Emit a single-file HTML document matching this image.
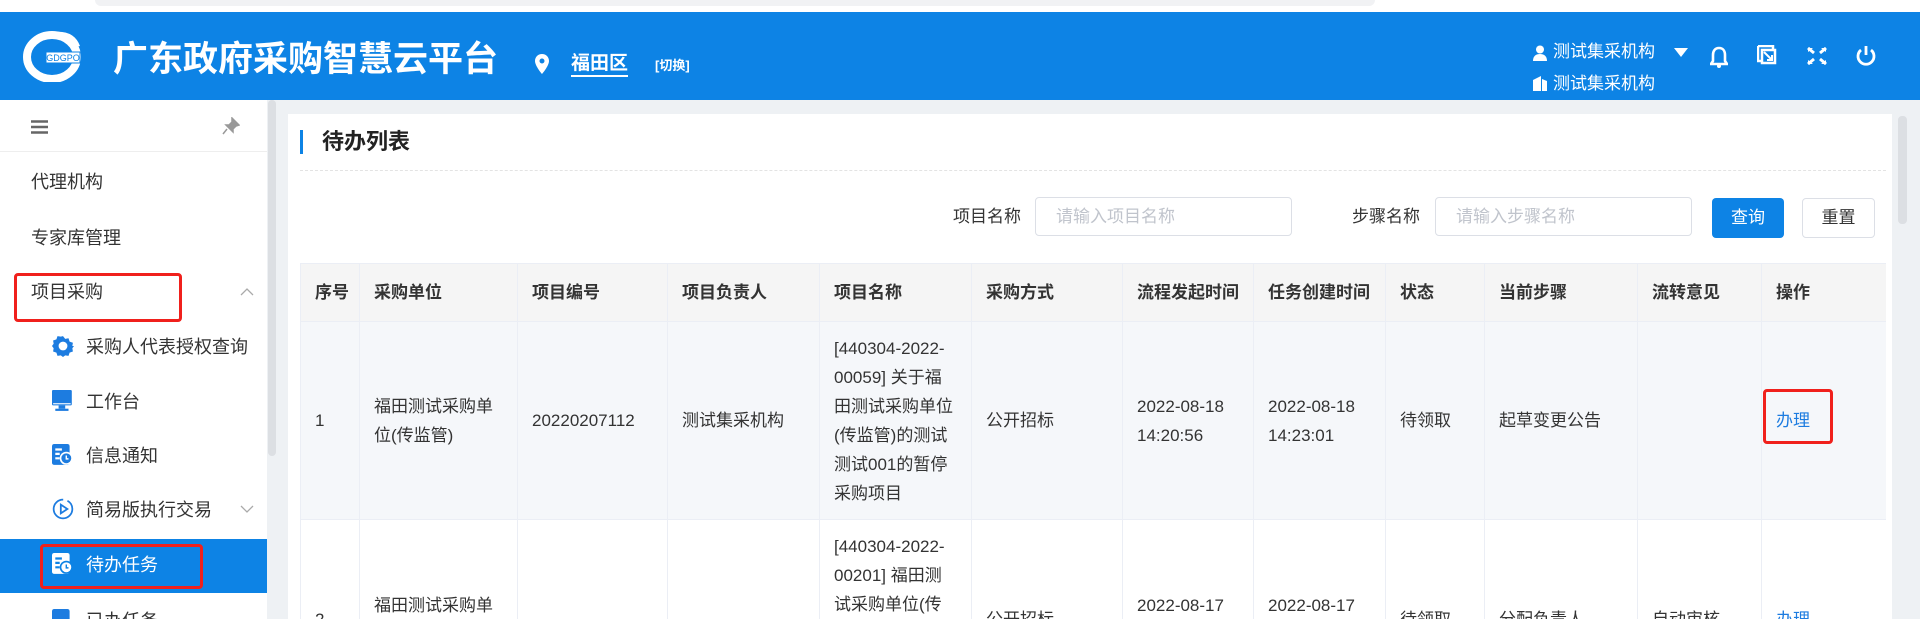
<!DOCTYPE html>
<html><head><meta charset="utf-8"><style>
*{margin:0;padding:0;box-sizing:border-box}
html{width:1920px;height:619px;overflow:hidden}
body{width:1920px;height:619px;overflow:hidden;background:#eef1f4;font-family:"Liberation Sans","Noto Sans CJK SC",sans-serif;color:#333;position:relative}
.abs{position:absolute}
#top{left:0;top:0;width:1920px;height:12px;background:#fff}
#top div{position:absolute;left:95px;top:0;width:1280px;height:6px;background:#f1f2f4;border-radius:0 0 8px 8px}
#hdr{left:0;top:12px;width:1920px;height:88px;background:#0d83e5;color:#fff}
.t{white-space:nowrap;line-height:1}
#side{left:0;top:100px;width:267px;height:519px;background:#fff;overflow:hidden}
#sbar{left:268px;top:100px;width:8px;height:356px;background:#dcdfe3;border-radius:4px}
.mi{position:absolute;font-size:18px;color:#333;white-space:nowrap;line-height:1}
#card{left:288px;top:114px;width:1604px;height:505px;background:#fff}
#tw{position:absolute;left:300px;top:263px;width:1586px;height:356px;overflow:hidden}
table{width:1586px;border-collapse:collapse;table-layout:fixed;font-size:17px}
td,th{border:1px solid #ebeef5;padding:0 14px;text-align:left;vertical-align:middle;line-height:29px}
th{background:#f5f5f5;height:58px;font-weight:bold;color:#333;white-space:nowrap;overflow:hidden}
tr.r1 td{background:#f5f7fa;height:198px}
tr.r2 td{height:200px}
.inp{position:absolute;height:39px;border:1px solid #dcdfe6;border-radius:4px;font-size:17px;color:#c0c4cc;padding-left:20px;line-height:37px}
.red{position:absolute;border:3px solid #f0201c;border-radius:4px}
</style></head><body>
<div id="top" class="abs"><div></div></div>
<div id="hdr" class="abs">
 <svg class="abs" style="left:22px;top:14px" width="60" height="56" viewBox="0 0 60 56">
  <ellipse cx="30" cy="31" rx="25" ry="22" fill="none" stroke="#fff" stroke-width="8"/>
  <path d="M32 6 Q52 4 58 20 L50 22 Q46 12 34 12 Z" fill="#fff"/>
  <rect x="24" y="26" width="34" height="11" fill="#fff" stroke="#0d83e5" stroke-width="1"/>
  <text x="41" y="35" font-size="9" fill="#0d83e5" text-anchor="middle" font-family="Liberation Sans">GDGPO</text>
 </svg>
 <div class="abs t" style="left:113px;top:30px;font-size:35px;font-weight:bold">广东政府采购智慧云平台</div>
 <svg class="abs" style="left:535px;top:42px" width="14" height="20" viewBox="0 0 14 20"><path d="M7 0C3 0 0 3 0 7c0 5 7 13 7 13s7-8 7-13c0-4-3-7-7-7zm0 9.5A2.5 2.5 0 1 1 7 4.5a2.5 2.5 0 0 1 0 5z" fill="#fff"/></svg>
 <div class="abs t" style="left:571px;top:42px;font-size:19px;font-weight:bold;border-bottom:2px solid #fff;padding-bottom:2px">福田区</div>
 <div class="abs t" style="left:655px;top:47px;font-size:13px;font-weight:bold">[切换]</div>
 <svg class="abs" style="left:1533px;top:33px" width="14" height="16" viewBox="0 0 14 16"><circle cx="7" cy="4.5" r="4" fill="#fff"/><path d="M0 16c0-5 3-7 7-7s7 2 7 7z" fill="#fff"/></svg>
 <div class="abs t" style="left:1553px;top:31px;font-size:17px">测试集采机构</div>
 <svg class="abs" style="left:1674px;top:36px" width="14" height="10"><path d="M0 0h14L7 9z" fill="#fff"/></svg>
 <svg class="abs" style="left:1533px;top:63px" width="14" height="16" viewBox="0 0 14 16"><path d="M0 5l8-4v15H0zM9 4l5 2v10H9z" fill="#fff"/></svg>
 <div class="abs t" style="left:1553px;top:63px;font-size:17px">测试集采机构</div>
 <svg class="abs" style="left:1710px;top:34px" width="18" height="22" viewBox="0 0 18 22"><path d="M9 2c-4 0-6 3-6 7v6l-2 3h16l-2-3V9c0-4-2-7-6-7z" fill="none" stroke="#fff" stroke-width="2.6"/><circle cx="9" cy="20" r="2" fill="#fff"/></svg>
 <svg class="abs" style="left:1757px;top:33px" width="20" height="20" viewBox="0 0 20 20"><path d="M1 1h15v4M1 1v15h4" fill="none" stroke="#fff" stroke-width="2.5"/><rect x="5" y="5" width="13" height="13" fill="none" stroke="#fff" stroke-width="2.5"/><path d="M7 7l8 8M10 15h5v-5" fill="none" stroke="#fff" stroke-width="2"/></svg>
 <svg class="abs" style="left:1807px;top:35px" width="20" height="18" viewBox="0 0 20 18"><path d="M1 1l6 5M19 1l-6 5M1 17l6-5M19 17l-6-5" stroke="#fff" stroke-width="3"/><path d="M1 1h5L1 5zM19 1h-5l5 4zM1 17h5l-5-4zM19 17h-5l5-4z" fill="#fff"/></svg>
 <svg class="abs" style="left:1855px;top:33px" width="22" height="22" viewBox="0 0 22 22"><path d="M6 5a8 8 0 1 0 10 0" fill="none" stroke="#fff" stroke-width="2.8"/><path d="M11 1v9" stroke="#fff" stroke-width="2.8"/></svg>
</div>

<div id="side" class="abs">
 <svg class="abs" style="left:31px;top:20px" width="17" height="14"><path d="M0 1.5h17M0 7h17M0 12.5h17" stroke="#666" stroke-width="2.6"/></svg>
 <svg class="abs" style="left:222px;top:17px" width="18" height="18" viewBox="0 0 18 18"><path d="M10 1l7 7-3 1-3 3 0 3-7-7 3 0 3-3zM5 12l-4 5" fill="#999" stroke="#999" stroke-width="1.5"/></svg>
 <div class="abs" style="left:0;top:51px;width:267px;height:1px;background:#eee"></div>
 <div class="mi" style="left:31px;top:73px">代理机构</div>
 <div class="mi" style="left:31px;top:129px">专家库管理</div>
 <div class="mi" style="left:31px;top:183px">项目采购</div>
 <svg class="abs" style="left:240px;top:187px" width="14" height="9"><path d="M1 8l6-6 6 6" fill="none" stroke="#aaa" stroke-width="1.3"/></svg>
 <svg class="abs" style="left:52px;top:235px" width="22" height="22" viewBox="0 0 20 20"><path d="M10 1l2 2.5 3-.5 1 3 3 1-.5 3L20 10l-1.5 2 .5 3-3 1-1 3-3-.5L10 20l-2-1.5-3 .5-1-3-3-1 .5-3L0 10l1.5-2L1 5l3-1 1-3 3 .5z" fill="#1d7ce0"/><circle cx="10" cy="10" r="4" fill="#fff"/></svg>
 <div class="mi" style="left:86px;top:238px">采购人代表授权查询</div>
 <svg class="abs" style="left:52px;top:290px" width="22" height="22" viewBox="0 0 20 20"><rect x="0" y="0" width="18" height="14" rx="1" fill="#1d7ce0"/><rect x="6" y="14" width="6" height="3" fill="#1d7ce0"/><rect x="3" y="17" width="12" height="2" fill="#1d7ce0"/><rect x="1" y="12" width="16" height="1" fill="#fff"/></svg>
 <div class="mi" style="left:86px;top:293px">工作台</div>
 <svg class="abs" style="left:52px;top:344px" width="22" height="22" viewBox="0 0 20 20"><rect x="0" y="0" width="16" height="19" rx="2" fill="#1d7ce0"/><path d="M3 5h6M3 9h4M3 13h4" stroke="#fff" stroke-width="2"/><circle cx="13" cy="13" r="6" fill="#fff"/><circle cx="13" cy="13" r="4.5" fill="#1d7ce0"/><path d="M13 10.5v3h2" stroke="#fff" stroke-width="1.3" fill="none"/></svg>
 <div class="mi" style="left:86px;top:347px">信息通知</div>
 <svg class="abs" style="left:52px;top:398px" width="22" height="22" viewBox="0 0 20 20"><circle cx="10" cy="10" r="8.5" fill="none" stroke="#1d7ce0" stroke-width="1.6" stroke-dasharray="40 4"/><path d="M8 6v8l6-4z" fill="none" stroke="#1d7ce0" stroke-width="1.6"/></svg>
 <div class="mi" style="left:86px;top:401px">简易版执行交易</div>
 <svg class="abs" style="left:240px;top:405px" width="14" height="9"><path d="M1 1l6 6 6-6" fill="none" stroke="#aaa" stroke-width="1.3"/></svg>
 <div class="abs" style="left:0;top:439px;width:267px;height:54px;background:#0d83e5"></div>
 <svg class="abs" style="left:52px;top:453px" width="22" height="22" viewBox="0 0 20 20"><rect x="0" y="0" width="16" height="19" rx="2" fill="#fff"/><path d="M3 5h6M3 9h4M3 13h4" stroke="#0d83e5" stroke-width="2"/><circle cx="13" cy="13" r="6" fill="#0d83e5"/><circle cx="13" cy="13" r="4.5" fill="#fff"/><path d="M13 10.5v3h2" stroke="#0d83e5" stroke-width="1.3" fill="none"/></svg>
 <div class="mi" style="left:86px;top:456px;color:#fff">待办任务</div>
 <svg class="abs" style="left:52px;top:509px" width="22" height="22" viewBox="0 0 20 20"><rect x="0" y="0" width="16" height="19" rx="2" fill="#1d7ce0"/></svg>
 <div class="mi" style="left:86px;top:512px">已办任务</div>
</div>
<div id="sbar" class="abs"></div>
<div class="red" style="left:14px;top:273px;width:168px;height:49px"></div>
<div class="red" style="left:40px;top:544px;width:163px;height:45px"></div>

<div id="card" class="abs"></div>
<div class="abs" style="left:1898px;top:116px;width:9px;height:108px;background:#dcdfe3;border-radius:4px"></div>
<div class="abs" style="left:300px;top:130px;width:3px;height:24px;background:#0d83e5"></div>
<div class="abs t" style="left:322px;top:131px;font-size:22px;font-weight:bold;color:#222">待办列表</div>
<div class="abs" style="left:300px;top:170px;width:1586px;height:0;border-top:1px dashed #e3e3e3"></div>

<div class="abs t" style="left:953px;top:208px;font-size:17px">项目名称</div>
<div class="inp" style="left:1035px;top:197px;width:257px">请输入项目名称</div>
<div class="abs t" style="left:1352px;top:208px;font-size:17px">步骤名称</div>
<div class="inp" style="left:1435px;top:197px;width:257px">请输入步骤名称</div>
<div class="abs t" style="left:1712px;top:198px;width:72px;height:40px;background:#0d83e5;border-radius:4px;color:#fff;font-size:17px;line-height:40px;text-align:center">查询</div>
<div class="abs t" style="left:1802px;top:198px;width:73px;height:40px;border:1px solid #dcdfe6;border-radius:4px;color:#333;font-size:17px;line-height:38px;text-align:center">重置</div>

<div id="tw"><table>
<colgroup><col style="width:59px"><col style="width:158px"><col style="width:150px"><col style="width:152px"><col style="width:152px"><col style="width:151px"><col style="width:131px"><col style="width:132px"><col style="width:99px"><col style="width:153px"><col style="width:124px"><col style="width:125px"></colgroup>
<tr><th>序号</th><th>采购单位</th><th>项目编号</th><th>项目负责人</th><th>项目名称</th><th>采购方式</th><th>流程发起时间</th><th>任务创建时间</th><th>状态</th><th>当前步骤</th><th>流转意见</th><th>操作</th></tr>
<tr class="r1"><td>1</td><td>福田测试采购单位(传监管)</td><td>20220207112</td><td>测试集采机构</td><td>[440304-2022-00059] 关于福田测试采购单位(传监管)的测试测试001的暂停采购项目</td><td>公开招标</td><td>2022-08-18 14:20:56</td><td>2022-08-18 14:23:01</td><td>待领取</td><td>起草变更公告</td><td></td><td style="color:#1d7ce0">办理</td></tr>
<tr class="r2"><td>2</td><td>福田测试采购单位(传监管)</td><td>-</td><td>-</td><td style="vertical-align:top;padding-top:12px">[440304-2022-00201] 福田测试采购单位(传监管)的测试项目</td><td>公开招标</td><td>2022-08-17 10:10:10</td><td>2022-08-17 10:10:10</td><td>待领取</td><td>分配负责人</td><td>自动审核</td><td style="color:#1d7ce0">办理</td></tr>
</table></div>
<div class="red" style="left:1763px;top:389px;width:70px;height:55px"></div>
</body></html>
